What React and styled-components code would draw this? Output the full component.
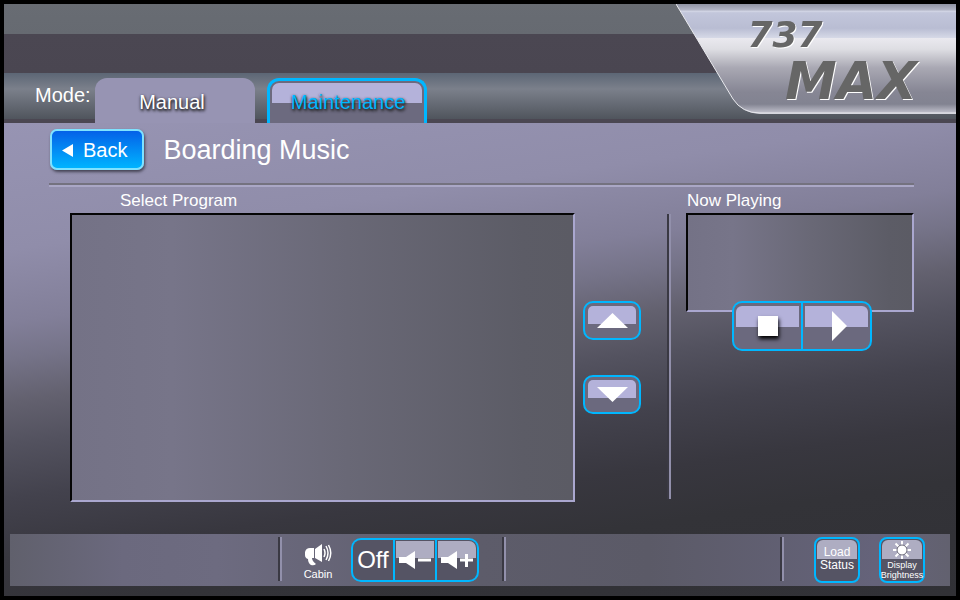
import React from "react";
import styled, { createGlobalStyle } from "styled-components";

const GlobalStyle = createGlobalStyle`
  *, *::before, *::after { box-sizing: border-box; }
  body {
    margin: 0;
    background: #000;
    color: #fff;
    font-family: "Liberation Sans", Arial, sans-serif;
  }
  button {
    margin: 0;
    color: inherit;
    font-family: inherit;
    cursor: pointer;
  }
  h1, h2 { margin: 0; font-weight: 400; }
  svg { display: block; flex: none; }
`;

const accent = "#00b7ff";

const Screen = styled.div`
  display: flex;
  flex-direction: column;
  min-height: 100vh;
  border: 4px solid #000;
`;

const Header = styled.header`
  display: flex;
  height: 119px;
  padding-left: 31px;
  background: linear-gradient(
    #686c73 0, #666a71 30px, #4b4752 30px, #4a4651 69px,
    #5c6675 69px, #7b808b 85px, #50555d 115px, #4b4752 115px
  );
`;

const ModeLabel = styled.span`
  width: 60px;
  padding-top: 80px;
  font-size: 20px;
  line-height: 22px;
`;

const Tabs = styled.nav`
  display: flex;
  flex: 1;
  align-items: flex-end;
  gap: 12px;
`;

const Tab = styled.button`
  width: 160px;
  height: 45px;
  padding: ${(p) => (p.$current ? "0 6px 0 0" : "2px 2px 0")};
  border: ${(p) => (p.$current ? "0" : `3px solid ${accent}`)};
  border-bottom: 0;
  border-radius: 12px 12px 0 0;
  background: ${(p) => (p.$current ? "#9794b3" : "#6c6a7f")};
  color: ${(p) => (p.$current ? "#fff" : accent)};
  font-size: 20px;
  line-height: 22px;
  text-shadow: 1px 2px 3px #222, 0 1px 3px #33333b;
`;

const TabFace = styled.span`
  display: flex;
  align-items: center;
  justify-content: center;
  height: 100%;
  padding: ${(p) => (p.$gloss ? "0 0 2px 2px" : "2px 0 0")};
  border-radius: 7px 7px 0 0;
  background: ${(p) => (p.$gloss ? "linear-gradient(#b4b2da 20px, transparent 20px)" : "none")};
`;

const Body = styled.div`
  display: flex;
  flex: 1;
  flex-direction: column;
  background: linear-gradient(
    172deg, #9794b3 0%, #908daa 21%, #827f99 33%, #757388 39%, #63616f 46%,
    #53525f 53%, #43424d 62%, #38373f 72%, #333338 81%, #313136 100%
  );
`;

const Main = styled.main`
  display: flex;
  flex: 1;
  flex-direction: column;
`;

const TitleBar = styled.div`
  display: flex;
  align-items: center;
  gap: 19px;
  height: 60px;
  margin: 0 42px 0 46px;
  padding-bottom: 8px;
`;

const BackButton = styled.button`
  display: flex;
  align-items: center;
  gap: 10px;
  height: 41px;
  padding: 2px 15px 0 10px;
  border: 2px solid #7fe2ff;
  border-radius: 7px;
  background: linear-gradient(#0461e8, #00b4ff);
  box-shadow: 1px 2px 3px #444354;
  font-size: 20px;
`;

const Title = styled.h1`
  padding-top: 2px;
  font-size: 27px;
  line-height: 32px;
`;

const Rule = styled.hr`
  flex: none;
  height: 4px;
  margin: 0 42px 0 45px;
  border: 0;
  background: linear-gradient(#74727f 2px, #aaa7c6 2px);
`;

const Content = styled.div`
  display: flex;
  flex: 1;
  padding: 4px 42px 32px 66px;
`;

const ProgramColumn = styled.section`
  display: flex;
  flex: 505;
  flex-direction: column;
`;

const PlayingColumn = styled.section`
  display: flex;
  flex: 228;
  flex-direction: column;
`;

const Label = styled.h2`
  padding-left: ${(p) => (p.$inset ? "50px" : "1px")};
  margin-bottom: 2px;
  font-size: 17px;
  line-height: 20px;
`;

const Well = styled.div`
  flex: ${(p) => (p.$fill ? "1" : "none")};
  height: 99px;
  min-height: 99px;
  border: 2px solid #aaa7cf;
  border-top-color: #050505;
  border-left-color: #050505;
  background: linear-gradient(90deg, #747286, #777589 20%, #696876 55%, #5c5c66 90%, #5b5b64);
`;

const Scroller = styled.div`
  display: flex;
  flex-direction: column;
  justify-content: center;
  gap: 35px;
  margin: 22px 26px 0 8px;
`;

const GlossButton = styled.button`
  width: 58px;
  height: 39px;
  padding: 3px;
  border: 2px solid ${accent};
  border-radius: 10px;
  background: #6b697e;
`;

const Face = styled.span`
  display: flex;
  align-items: center;
  justify-content: center;
  height: 100%;
  border-radius: ${(p) => p.$corners || "5px 5px 0 0"};
  background: linear-gradient(${(p) => p.$tone || "#b4b2da"} ${(p) => p.$gloss}, transparent ${(p) => p.$gloss});
`;

const Divider = styled.div`
  width: 4px;
  margin: ${(p) => p.$margin || "0"};
  background: linear-gradient(90deg, #3a3943 2px, #9290ab 2px);
`;

const ButtonGroup = styled.div`
  display: grid;
  grid-auto-flow: column;
  grid-auto-columns: 1fr;
  gap: 2px;
  width: ${(p) => p.$width};
  height: ${(p) => p.$height};
  overflow: hidden;
  border: 2px solid ${accent};
  border-radius: 10px;
  background: ${accent};
`;

const Transport = styled.div`
  display: flex;
  justify-content: center;
  margin-top: -11px;
  padding-left: 4px;
`;

const GroupButton = styled.button`
  padding: ${(p) => p.$pad || "0"};
  border: 0;
  background: ${(p) => (p.$dark ? "#555464" : "#6b697e")};
  font-size: 24px;
`;

const StopIcon = styled.span`
  width: 20px;
  height: 20px;
  background: #fff;
  box-shadow: 1px 3px 4px #000;
`;

const Footer = styled.footer`
  padding: 0 6px 10px;
`;

const FooterBar = styled.div`
  display: grid;
  grid-template-columns: 268fr 4px 220fr 4px 274fr 4px 166fr;
  height: 52px;
  background: linear-gradient(90deg, #60606c, #6b697e 12%, #6d6b80 22%, #5d5c6a 50%, #5b5a67 68%, #65637a 92%, #62616f);
`;

const FooterCell = styled.div`
  display: flex;
  align-items: center;
  justify-content: ${(p) => (p.$end ? "flex-end" : "flex-start")};
  gap: 19px;
  padding: ${(p) => (p.$end ? "0 25px 0 0" : "0 0 0 22px")};
`;

const Cabin = styled.div`
  display: flex;
  flex-direction: column;
  align-items: center;
  width: 28px;
  gap: 2px;
  padding-top: 3px;
  font-size: 11px;
  line-height: 12px;
`;

const TileButton = styled.button`
  width: 46px;
  height: 46px;
  padding: 1px;
  border: 2px solid ${accent};
  border-radius: 8px;
  background: #555464;
`;

const TileFace = styled.span`
  display: flex;
  flex-direction: column;
  align-items: center;
  justify-content: ${(p) => (p.$small ? "flex-start" : "center")};
  height: 100%;
  padding-bottom: ${(p) => (p.$small ? "0" : "2px")};
  border-radius: 6px 6px 0 0;
  background: linear-gradient(#aeadc2 19px, transparent 19px);
  font-size: ${(p) => (p.$small ? "9px" : "12px")};
  line-height: ${(p) => (p.$small ? "10px" : "13px")};
  white-space: nowrap;
`;

const LogoArt = styled.svg`
  text {
    fill: #666;
    font-family: "DejaVu Sans", sans-serif;
    font-weight: 700;
    font-style: italic;
    text-anchor: middle;
    filter: drop-shadow(1px 1px 0 #fff);
  }
`;

function Logo() {
  return (
    <LogoArt width="280" height="110" viewBox="0 0 280 110" role="img" aria-label="737 MAX">
      <defs>
        <linearGradient id="chrome" x1="0" y1="0" x2="0" y2="1">
          <stop offset="0" stopColor="#8f93a3" />
          <stop offset="0.055" stopColor="#b3b6c7" />
          <stop offset="0.065" stopColor="#d4d7e6" />
          <stop offset="0.08" stopColor="#c2c6db" />
          <stop offset="0.22" stopColor="#b9bdd3" />
          <stop offset="0.305" stopColor="#d5d8e6" />
          <stop offset="0.31" stopColor="#eae9ef" />
          <stop offset="0.41" stopColor="#dedee3" />
          <stop offset="0.58" stopColor="#a9a8b3" />
          <stop offset="0.8" stopColor="#868694" />
          <stop offset="0.91" stopColor="#828391" />
          <stop offset="1" stopColor="#c9c9d4" />
        </linearGradient>
      </defs>
      <path d="M0 0L57 95Q66 109 84 110H280V0Z" fill="url(#chrome)" />
      <path d="M0 0L57 95Q66 109 84 109H280" fill="none" stroke="#e8e9ed" />
      <text x="109" y="43" fontSize="36">737</text>
      <text x="175" y="95" fontSize="52">MAX</text>
    </LogoArt>
  );
}

const Triangle = ({ w, h, points }) => (
  <svg width={w} height={h} viewBox={`0 0 ${w} ${h}`} aria-hidden="true">
    <polygon points={points} fill="#fff" />
  </svg>
);

const Speaker = ({ plus }) => (
  <svg width="34" height="18" viewBox="0 0 34 18" aria-hidden="true">
    <path d="M1 6H8L17 0V18L8 12H1Z" fill="#fff" />
    <path d={plus ? "M20 9H33M26.500 3V16" : "M20 9H33"} stroke="#fff" strokeWidth="3" />
  </svg>
);

const Megaphone = () => (
  <svg width="28" height="22" viewBox="0 0 28 22" aria-hidden="true">
    <path d="M1 8Q2 4 6 4H10V14H8Q8 17 12 20Q10 22 7 21Q4 19 4 15Q1 14 1 11Z" fill="#fff" />
    <path d="M11 5L18 0V18L11 14Z" fill="#fff" />
    <path d="M20 5Q22 9 20 13M22 2Q26 9 22 16M24.500 1Q29 9 24.500 17" fill="none" stroke="#fff" strokeWidth="1.500" />
  </svg>
);

const Sun = () => (
  <svg width="20" height="20" viewBox="0 0 20 20" aria-hidden="true">
    <path d="M10 1V19M1 10H19M3.500 3.500L16.500 16.500M16.500 3.500L3.500 16.500" stroke="#fff" strokeWidth="2" />
    <circle cx="10" cy="10" r="5" fill="#fff" stroke="#666574" />
  </svg>
);

export default function App() {
  return (
    <Screen>
      <GlobalStyle />
      <Header>
        <ModeLabel>Mode:</ModeLabel>
        <Tabs aria-label="Mode">
          <Tab $current aria-current="page">
            <TabFace>Manual</TabFace>
          </Tab>
          <Tab>
            <TabFace $gloss>Maintenance</TabFace>
          </Tab>
        </Tabs>
        <Logo />
      </Header>
      <Body>
        <Main>
          <TitleBar>
            <BackButton>
              <Triangle w={11} h={13} points="11,0 11,13 0,6.500" />
              Back
            </BackButton>
            <Title>Boarding Music</Title>
          </TitleBar>
          <Rule />
          <Content>
            <ProgramColumn>
              <Label $inset>Select Program</Label>
              <Well $fill />
            </ProgramColumn>
            <Scroller>
              <GlossButton aria-label="Scroll up">
                <Face $gloss="18px">
                  <Triangle w={31} h={15} points="15.500,0 31,15 0,15" />
                </Face>
              </GlossButton>
              <GlossButton aria-label="Scroll down">
                <Face $gloss="18px">
                  <Triangle w={31} h={15} points="0,0 31,0 15.500,15" />
                </Face>
              </GlossButton>
            </Scroller>
            <Divider $margin="23px 15px 3px 0" />
            <PlayingColumn>
              <Label>Now Playing</Label>
              <Well />
              <Transport>
                <ButtonGroup $width="140px" $height="50px">
                  <GroupButton aria-label="Stop" $pad="3px 2px">
                    <Face $gloss="21px" $corners="6px 0 0 0">
                      <StopIcon />
                    </Face>
                  </GroupButton>
                  <GroupButton aria-label="Play" $pad="3px 2px">
                    <Face $gloss="21px" $corners="0 6px 0 0">
                      <Triangle w={21} h={30} points="6,0 21,15 6,30" />
                    </Face>
                  </GroupButton>
                </ButtonGroup>
              </Transport>
            </PlayingColumn>
          </Content>
        </Main>
        <Footer>
          <FooterBar>
            <div />
            <Divider $margin="3px 0 5px" />
            <FooterCell>
              <Cabin>
                <Megaphone />
                Cabin
              </Cabin>
              <ButtonGroup $width="128px" $height="44px">
                <GroupButton $dark>Off</GroupButton>
                <GroupButton $dark $pad="1px" aria-label="Volume down">
                  <Face $gloss="17px" $tone="#aeadc2" $corners="0">
                    <Speaker />
                  </Face>
                </GroupButton>
                <GroupButton $dark $pad="1px" aria-label="Volume up">
                  <Face $gloss="17px" $tone="#aeadc2" $corners="0 7px 0 0">
                    <Speaker plus />
                  </Face>
                </GroupButton>
              </ButtonGroup>
            </FooterCell>
            <Divider $margin="3px 0 5px" />
            <div />
            <Divider $margin="3px 0 5px" />
            <FooterCell $end>
              <TileButton>
                <TileFace>
                  <span>Load</span>
                  <span>Status</span>
                </TileFace>
              </TileButton>
              <TileButton>
                <TileFace $small>
                  <Sun />
                  <span>Display</span>
                  <span>Brightness</span>
                </TileFace>
              </TileButton>
            </FooterCell>
          </FooterBar>
        </Footer>
      </Body>
    </Screen>
  );
}
